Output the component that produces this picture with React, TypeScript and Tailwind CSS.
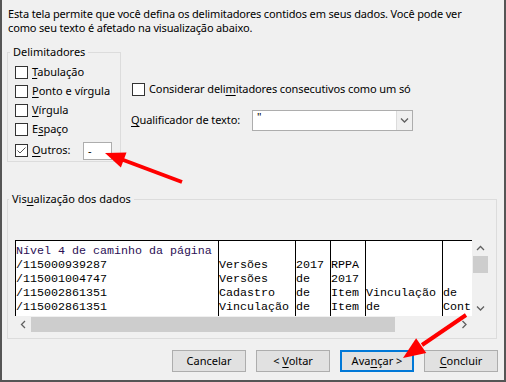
import React from "react";

function Box({ checked }: { checked?: boolean }) {
  return (
    <span className="w-[13px] h-[13px] border border-[#333333] bg-white flex items-center justify-center shrink-0">
      {checked && (
        <svg width="11" height="11" viewBox="0 0 11 11">
          <path d="M1.5 5.5 L4 8 L9.5 2.5" fill="none" stroke="#555" strokeWidth="1" />
        </svg>
      )}
    </span>
  );
}

function U({ children }: { children: React.ReactNode }) {
  return <span className="underline underline-offset-[2px]">{children}</span>;
}

function Chevron({ dir }: { dir: "up" | "down" | "left" | "right" }) {
  const d = {
    up: "M1 5 L4.5 1.5 L8 5",
    down: "M1 1.5 L4.5 5 L8 1.5",
    left: "M5 1 L1.5 4.5 L5 8",
    right: "M1.5 1 L5 4.5 L1.5 8",
  }[dir];
  const vertical = dir === "up" || dir === "down";
  return (
    <svg width={vertical ? 9 : 7} height={vertical ? 7 : 9} viewBox={vertical ? "0 0 9 7" : "0 0 7 9"}>
      <path d={d} fill="none" stroke="#606060" strokeWidth="1.3" />
    </svg>
  );
}

const columns = [
  { w: "w-[203px]", cells: ["Nível 4 de caminho da página", "/115000939287", "/115001004747", "/115002861351", "/115002861351"] },
  { w: "w-[77px]", cells: ["", "Versões", "Versões", "Cadastro", "Vinculação"] },
  { w: "w-[35px]", cells: ["", "2017", "de", "de", "de"] },
  { w: "w-[35px]", cells: ["", "RPPA", "2017", "Item", "Item"] },
  { w: "w-[77px]", cells: ["", "", "", "Vinculação", "de"] },
  { w: "w-[30px]", cells: ["", "", "", "de", "Cont:"] },
];

export default function App() {
  return (
    <div className="relative w-[506px] h-[382px] overflow-hidden bg-[#f0f0f0] border-x-2 border-b-2 border-[#555555] text-[11px] text-black font-['Noto_Sans',sans-serif]">
      {/* intro */}
      <p className="pl-[6px] pt-[7px] leading-[14px] tracking-[-0.15px]">
        Esta tela permite que você defina os delimitadores contidos em seus dados. Você pode ver
        <br />
        como seu texto é afetado na visualização abaixo.
      </p>

      {/* delimiters + options */}
      <div className="flex mt-[10px] ml-[5px] h-[117px]">
        <fieldset className="w-[114px] h-[117px] border border-[#dcdcdc] pl-[7px] pt-[4px]">
          <legend className="-ml-[5px] px-[3px] leading-[14px]">Delimitadores</legend>
          <div className="flex flex-col">
            {[
              [<><U>T</U>abulação</>, false],
              [<><U>P</U>onto e vírgula</>, false],
              [<><U>V</U>írgula</>, false],
              [<>E<U>s</U>paço</>, false],
            ].map(([label, c], i) => (
              <label key={i} className="h-[19px] flex items-center gap-[4px]">
                <Box checked={c as boolean} />
                <span>{label}</span>
              </label>
            ))}
            <div className="h-[21px] mt-[1px] flex items-center">
              <label className="flex items-center gap-[4px] w-[68px]">
                <Box checked />
                <span>
                  <U>O</U>utros:
                </span>
              </label>
              <div className="w-[29px] h-[18px] border border-[#adadad] bg-white pl-[4px] leading-[15px]">-</div>
            </div>
          </div>
        </fieldset>

        <div className="ml-[11px] pt-[38px] flex flex-col">
          <label className="flex items-center gap-[4px] h-[13px]">
            <Box />
            <span className="tracking-[-0.1px]">
              Considerar deli<U>m</U>itadores consecutivos como um só
            </span>
          </label>
          <div className="flex items-center mt-[14px] -ml-[1px]">
            <span className="w-[121px] tracking-[-0.1px]">
              <U>Q</U>ualificador de texto:
            </span>
            <div className="flex w-[161px] h-[21px] border border-[#adadad] bg-white">
              <div className="flex-1 pl-[4px] leading-[12px]">"</div>
              <div className="w-[16px] border-l border-[#dcdcdc] bg-[#f0f0f0] flex items-center justify-center">
                <Chevron dir="down" />
              </div>
            </div>
          </div>
        </div>
      </div>

      {/* preview */}
      <fieldset className="mt-[30px] ml-[5px] w-[490px] h-[147px] border border-[#dcdcdc] pl-[7px] pt-[34px]">
        <legend className="-ml-[6px] px-[3px] leading-[14px]">
          Vis<U>u</U>alização dos dados
        </legend>
        <div className="flex flex-col w-[474px]">
          <div className="flex h-[76px]">
            <div className="w-[457px] h-[76px] bg-white border-t border-black flex overflow-hidden font-['Liberation_Mono',monospace] text-[11.67px] leading-[14px]">
              {columns.map((col, i) => (
                <div key={i} className={`${col.w} shrink-0 border-l border-black pt-[3px] overflow-hidden whitespace-nowrap`}>
                  {col.cells.map((c, j) => (
                    <div key={j} className={`h-[14px] ${i === 0 && j === 0 ? "text-[#2b1055]" : ""}`}>
                      {c}
                    </div>
                  ))}
                </div>
              ))}
              <div className="border-l border-black h-full" />
            </div>
            <div className="w-[17px] h-[76px] flex flex-col items-center">
              <div className="h-[16px] flex items-center justify-center">
                <Chevron dir="up" />
              </div>
              <div className="w-[15px] h-[17px] bg-[#cdcdcd]" />
              <div className="flex-1" />
              <div className="h-[16px] flex items-center justify-center">
                <Chevron dir="down" />
              </div>
            </div>
          </div>
          <div className="flex h-[16px]">
            <div className="w-[457px] flex items-center">
              <div className="w-[16px] flex items-center justify-center">
                <Chevron dir="left" />
              </div>
              <div className="w-[364px] h-[15px] bg-[#cdcdcd]" />
              <div className="flex-1" />
              <div className="w-[16px] flex items-center justify-center">
                <Chevron dir="right" />
              </div>
            </div>
            <div className="w-[17px]" />
          </div>
        </div>
      </fieldset>

      {/* buttons */}
      <div className="flex justify-end gap-[10px] mt-[11px] pr-[6px]">
        <button className="w-[74px] h-[22px] bg-[#e1e1e1] border border-[#adadad]">Cancelar</button>
        <button className="w-[74px] h-[22px] bg-[#e1e1e1] border border-[#adadad]">
          &lt; <U>V</U>oltar
        </button>
        <button className="w-[74px] h-[22px] bg-[#e1e1e1] border-2 border-[#0078d7]">
          Ava<U>n</U>çar &gt;
        </button>
        <button className="w-[74px] h-[22px] bg-[#e1e1e1] border border-[#adadad]">
          <U>C</U>oncluir
        </button>
      </div>

      {/* annotation arrows */}
      <svg className="absolute inset-0 pointer-events-none" width="506" height="382" viewBox="0 0 506 382">
        <line x1="180" y1="182" x2="120" y2="159.5" stroke="#ff0000" strokeWidth="4" />
        <polygon points="103,153 124.5,152.5 118.9,167.5" fill="#ff0000" />
        <line x1="464" y1="315" x2="420" y2="345" stroke="#ff0000" strokeWidth="4" />
        <polygon points="401,358 424.3,353 414.1,338.2" fill="#ff0000" />
      </svg>
    </div>
  );
}
